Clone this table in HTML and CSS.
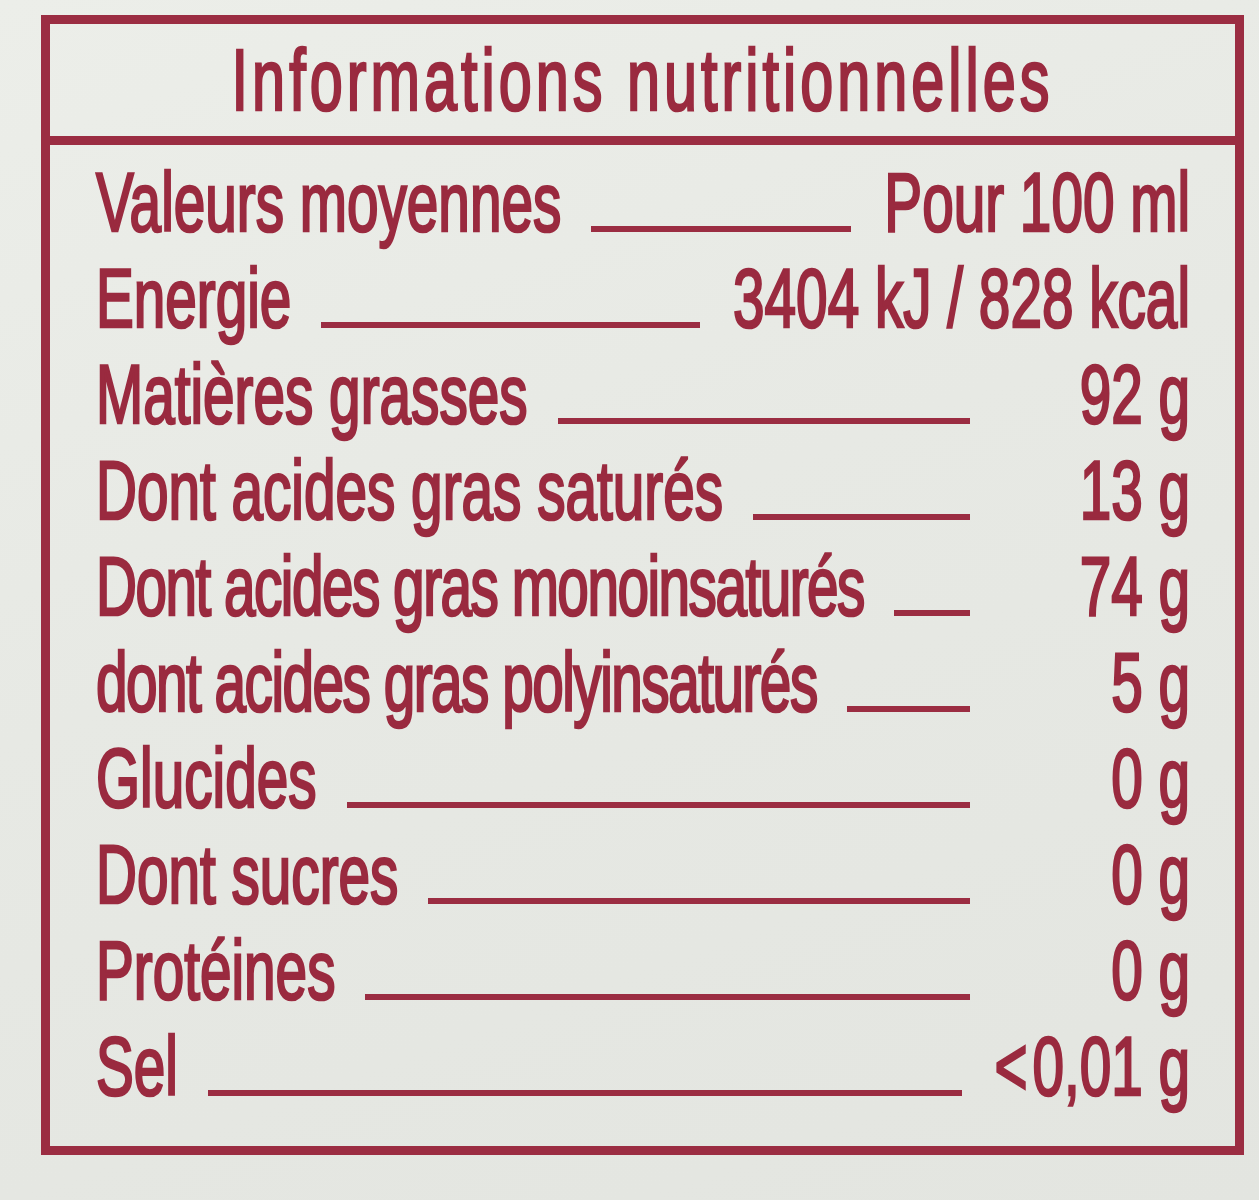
FILE: index.html
```html
<!DOCTYPE html>
<html lang="fr">
<head>
<meta charset="utf-8">
<title>Informations nutritionnelles</title>
<link rel="stylesheet" href="styles.css">
</head>
<body>
<div class="label">
  <div class="title"><span class="txt">Informations nutritionnelles</span></div>
  <div class="rows">
    <div class="row"><span class="txt name">Valeurs moyennes</span><span class="leader"></span><span class="txt val">Pour 100 ml</span></div>
    <div class="row"><span class="txt name">Energie</span><span class="leader"></span><span class="txt val">3404 kJ / 828 kcal</span></div>
    <div class="row"><span class="txt name">Matières grasses</span><span class="leader"></span><span class="txt val">92 g</span></div>
    <div class="row"><span class="txt name">Dont acides gras saturés</span><span class="leader"></span><span class="txt val">13 g</span></div>
    <div class="row"><span class="txt name long">Dont acides gras monoinsaturés</span><span class="leader"></span><span class="txt val">74 g</span></div>
    <div class="row"><span class="txt name long">dont acides gras polyinsaturés</span><span class="leader"></span><span class="txt val">5 g</span></div>
    <div class="row"><span class="txt name">Glucides</span><span class="leader"></span><span class="txt val">0 g</span></div>
    <div class="row"><span class="txt name">Dont sucres</span><span class="leader"></span><span class="txt val">0 g</span></div>
    <div class="row"><span class="txt name">Protéines</span><span class="leader"></span><span class="txt val">0 g</span></div>
    <div class="row"><span class="txt name">Sel</span><span class="leader"></span><span class="txt val">&lt;&#8202;0,01 g</span></div>
  </div>
</div>
</body>
</html>
```
FILE: styles.css
```css
html, body {
  margin: 0;
  padding: 0;
  overflow: hidden;
}

body {
  height: 1200px;
  background: linear-gradient(160deg, #eceee9 0%, #e7e9e4 45%, #e3e5e0 100%);
  padding: 15px 15px 0 41px;
  box-sizing: border-box;
}

.label {
  width: 1203px;
  box-sizing: border-box;
  border: 9px solid #9b2d42;
  font-family: "Liberation Sans", Arial, sans-serif;
  color: #9a2a3f;
  -webkit-text-stroke: 1.8px #9a2a3f;
  filter: blur(0.6px);
}

/* text is drawn narrow, then stretched vertically to get a condensed face */
.txt {
  display: inline-block;
  transform: scaleY(1.4815);
  transform-origin: 50% 0;
  white-space: nowrap;
}

.title {
  height: 112px;
  text-align: center;
  border-bottom: 9px solid #9b2d42;
}

.title .txt {
  font-size: 59.4px;
  line-height: 75.6px;
  letter-spacing: 4px;
}

.rows {
  padding: 10px 45px 31px 46px;
}

.row {
  display: flex;
  align-items: flex-start;
  height: 96px;
}

.row .txt {
  flex: none;
  font-size: 56.7px;
  line-height: 64.8px;
}

.name.long {
  letter-spacing: -1.5px;
}

.leader {
  flex: 1;
  height: 6px;
  margin: 71px 33px 0 30px;
  background: #9b2d42;
}

.val {
  min-width: 187px;
  text-align: right;
}
```
